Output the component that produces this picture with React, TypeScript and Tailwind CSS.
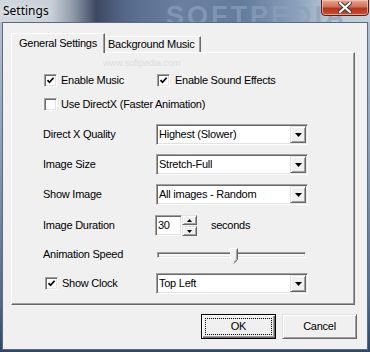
import React from 'react';

const ui = "font-['Liberation_Sans',Arial,sans-serif] text-[11px] tracking-[-0.25px] text-black";
const sunken =
  'border border-t-[#a0a0a0] border-l-[#a0a0a0] border-r-white border-b-white shadow-[inset_1px_1px_0_#696969,inset_-1px_-1px_0_#e3e3e3]';
const raised =
  'border border-t-[#e3e3e3] border-l-[#e3e3e3] border-r-[#696969] border-b-[#696969] shadow-[inset_1px_1px_0_#ffffff,inset_-1px_-1px_0_#a0a0a0] bg-[#f0f0f0]';

const Check: React.FC<{ checked?: boolean }> = ({ checked }) => (
  <div className={`flex h-[13px] w-[13px] shrink-0 items-center justify-center bg-white ${sunken}`}>
    {checked && (
      <svg width="9" height="9" viewBox="0 0 9 9">
        <path d="M1.5 4.2 L3.5 6.3 L7.6 1.8" fill="none" stroke="#000" strokeWidth="1.7" />
      </svg>
    )}
  </div>
);

const Arrow: React.FC<{ up?: boolean; small?: boolean }> = ({ up, small }) => {
  const w = small ? 5 : 7;
  const h = small ? 3 : 4;
  return (
    <svg width={w} height={h} viewBox={`0 0 ${w} ${h}`}>
      <polygon points={up ? `0,${h} ${w},${h} ${w / 2},0` : `0,0 ${w},0 ${w / 2},${h}`} fill="#000" />
    </svg>
  );
};

const Select: React.FC<{ value: string }> = ({ value }) => (
  <div className={`flex h-[21px] w-[152px] items-center bg-white ${sunken}`}>
    <div className="flex-1 pl-[2px] leading-none">{value}</div>
    <div className={`mr-[1px] flex h-[17px] w-[16px] items-center justify-center ${raised}`}>
      <Arrow />
    </div>
  </div>
);

const Row: React.FC<{ className?: string; children: React.ReactNode }> = ({ className, children }) => (
  <div className={`flex h-[21px] items-center ${className ?? ''}`}>{children}</div>
);

const Label: React.FC<{ text: string }> = ({ text }) => <div className="w-[113px] shrink-0">{text}</div>;

export default function App() {
  return (
    <div className="relative h-[352px] w-[370px] overflow-hidden bg-[linear-gradient(180deg,#b9c5d3_0%,#8fa1b8_40%,#52698a_85%,#2f4767_100%)]">
      {/* title bar */}
      <div className="relative flex h-[22px] items-center bg-[linear-gradient(90deg,#d3d8df_0%,#c7ced7_14%,#8c97a8_20%,#3d4860_26%,#56698a_34%,#6a80a0_48%,#647c9d_66%,#8aa0bb_80%,#b3c2d3_88%,#c4d0dd_100%)]">
        <div className="pointer-events-none absolute left-[166px] top-[-4px] font-['Liberation_Sans',Arial,sans-serif] text-[27px] font-bold tracking-[3px] text-[#8ba0bb] opacity-70">
          SOFTPEDIA
        </div>
        <span className="relative pl-[3px] font-['Noto_Sans',sans-serif] text-[12px] text-black [text-shadow:0_0_6px_#ffffff]">
          Settings
        </span>
        <div className="absolute right-[1px] top-[-1px] flex h-[17px] w-[48px] items-center justify-center rounded-b-[4px] border border-[#5c2016] bg-[linear-gradient(180deg,#e7a896_0%,#d0705a_45%,#b8331c_55%,#c8502f_100%)] shadow-[inset_0_0_0_1px_rgba(255,210,190,0.6)]">
          <svg width="14" height="11" viewBox="0 0 14 11">
            <path d="M2 1 L12 10 M12 1 L2 10" stroke="#3a3a3a" strokeWidth="4" strokeLinecap="round" />
            <path d="M2 1 L12 10 M12 1 L2 10" stroke="#ffffff" strokeWidth="2.2" strokeLinecap="round" />
          </svg>
        </div>
      </div>

      {/* client area */}
      <div className={`relative mx-[2px] h-[328px] border border-[#5d6a7c] bg-[#f0f0f0] pl-[8px] pt-[11px] ${ui}`}>
        <div className="pointer-events-none absolute left-[100px] top-[34px] text-[9px] tracking-normal text-[#dcdcdc]">
          www.softpedia.com
        </div>

        {/* tabs */}
        <div className="relative z-10 flex h-[18px] items-end">
          <div className="-mb-[1px] flex h-[20px] w-[94px] items-center border-l border-t border-r border-l-white border-t-white border-r-[#696969] bg-[#f0f0f0] pl-[7px] shadow-[inset_-1px_0_0_#a0a0a0]">
            General Settings
          </div>
          <div className="flex h-[16px] w-[96px] items-center border-t border-r border-t-white border-r-[#696969] pl-[3px] shadow-[inset_-1px_0_0_#a0a0a0]">
            Background Music
          </div>
        </div>

        {/* panel */}
        <div className="relative h-[253px] w-[344px] border border-t-white border-l-white border-r-[#696969] border-b-[#696969] pl-[31px] pt-[17px] shadow-[inset_-1px_-1px_0_#a0a0a0]">
          <Row>
            <div className="flex w-[113px] items-center gap-[4px] pl-[1px]">
              <Check checked />
              <span>Enable Music</span>
            </div>
            <div className="flex items-center gap-[5px] pl-[1px]">
              <Check checked />
              <span>Enable Sound Effects</span>
            </div>
          </Row>
          <Row className="mt-[3px]">
            <div className="flex items-center gap-[4px] pl-[1px]">
              <Check />
              <span>Use DirectX (Faster Animation)</span>
            </div>
          </Row>
          <Row className="mt-[9px]">
            <Label text="Direct X Quality" />
            <Select value="Highest (Slower)" />
          </Row>
          <Row className="mt-[9px]">
            <Label text="Image Size" />
            <Select value="Stretch-Full" />
          </Row>
          <Row className="mt-[9px]">
            <Label text="Show Image" />
            <Select value="All images - Random" />
          </Row>
          <Row className="mt-[10px]">
            <Label text="Image Duration" />
            <div className={`-ml-[1px] flex h-[21px] w-[27px] items-center bg-white pl-[2px] ${sunken}`}>30</div>
            <div className="flex h-[21px] w-[15px] flex-col">
              <div className={`flex h-[10px] items-center justify-center ${raised}`}>
                <Arrow up small />
              </div>
              <div className={`mt-[1px] flex h-[10px] items-center justify-center ${raised}`}>
                <Arrow small />
              </div>
            </div>
            <span className="ml-[14px]">seconds</span>
          </Row>
          <Row className="mt-[8px]">
            <Label text="Animation Speed" />
            <div className="relative ml-[1px] h-[6px] w-[149px] border border-t-[#a0a0a0] border-l-[#a0a0a0] border-r-white border-b-white bg-[#f8f8f8] shadow-[inset_1px_1px_0_#696969,inset_-1px_-1px_0_#e3e3e3]">
              <svg className="absolute left-[72px] top-[-5px]" width="8" height="16" viewBox="0 0 8 16">
                <polygon points="0.5,0.5 7.5,0.5 7.5,11.5 4,15.5 0.5,11.5" fill="#f0f0f0" />
                <path d="M0.5 11.5 V0.5 H7" fill="none" stroke="#ffffff" />
                <path d="M7.5 0.5 V11.5 L4 15.5" fill="none" stroke="#696969" />
                <path d="M6.5 1.5 V11 L4 14" fill="none" stroke="#a0a0a0" />
              </svg>
            </div>
          </Row>
          <Row className="mt-[8px]">
            <div className="flex w-[113px] items-center gap-[4px] pl-[2px]">
              <Check checked />
              <span>Show Clock</span>
            </div>
            <Select value="Top Left" />
          </Row>
        </div>

        {/* buttons */}
        <div className="mt-[9px] flex justify-end gap-[6px] pr-[10px]">
          <div className="flex h-[25px] w-[75px] items-center justify-center border border-black bg-[#f0f0f0] shadow-[inset_1px_1px_0_#ffffff,inset_-1px_-1px_0_#696969,inset_-2px_-2px_0_#a0a0a0]">
            <div className="flex h-[17px] w-[67px] items-center justify-center border border-dotted border-black">
              OK
            </div>
          </div>
          <div className={`flex h-[25px] w-[75px] items-center justify-center ${raised}`}>Cancel</div>
        </div>
      </div>
    </div>
  );
}
